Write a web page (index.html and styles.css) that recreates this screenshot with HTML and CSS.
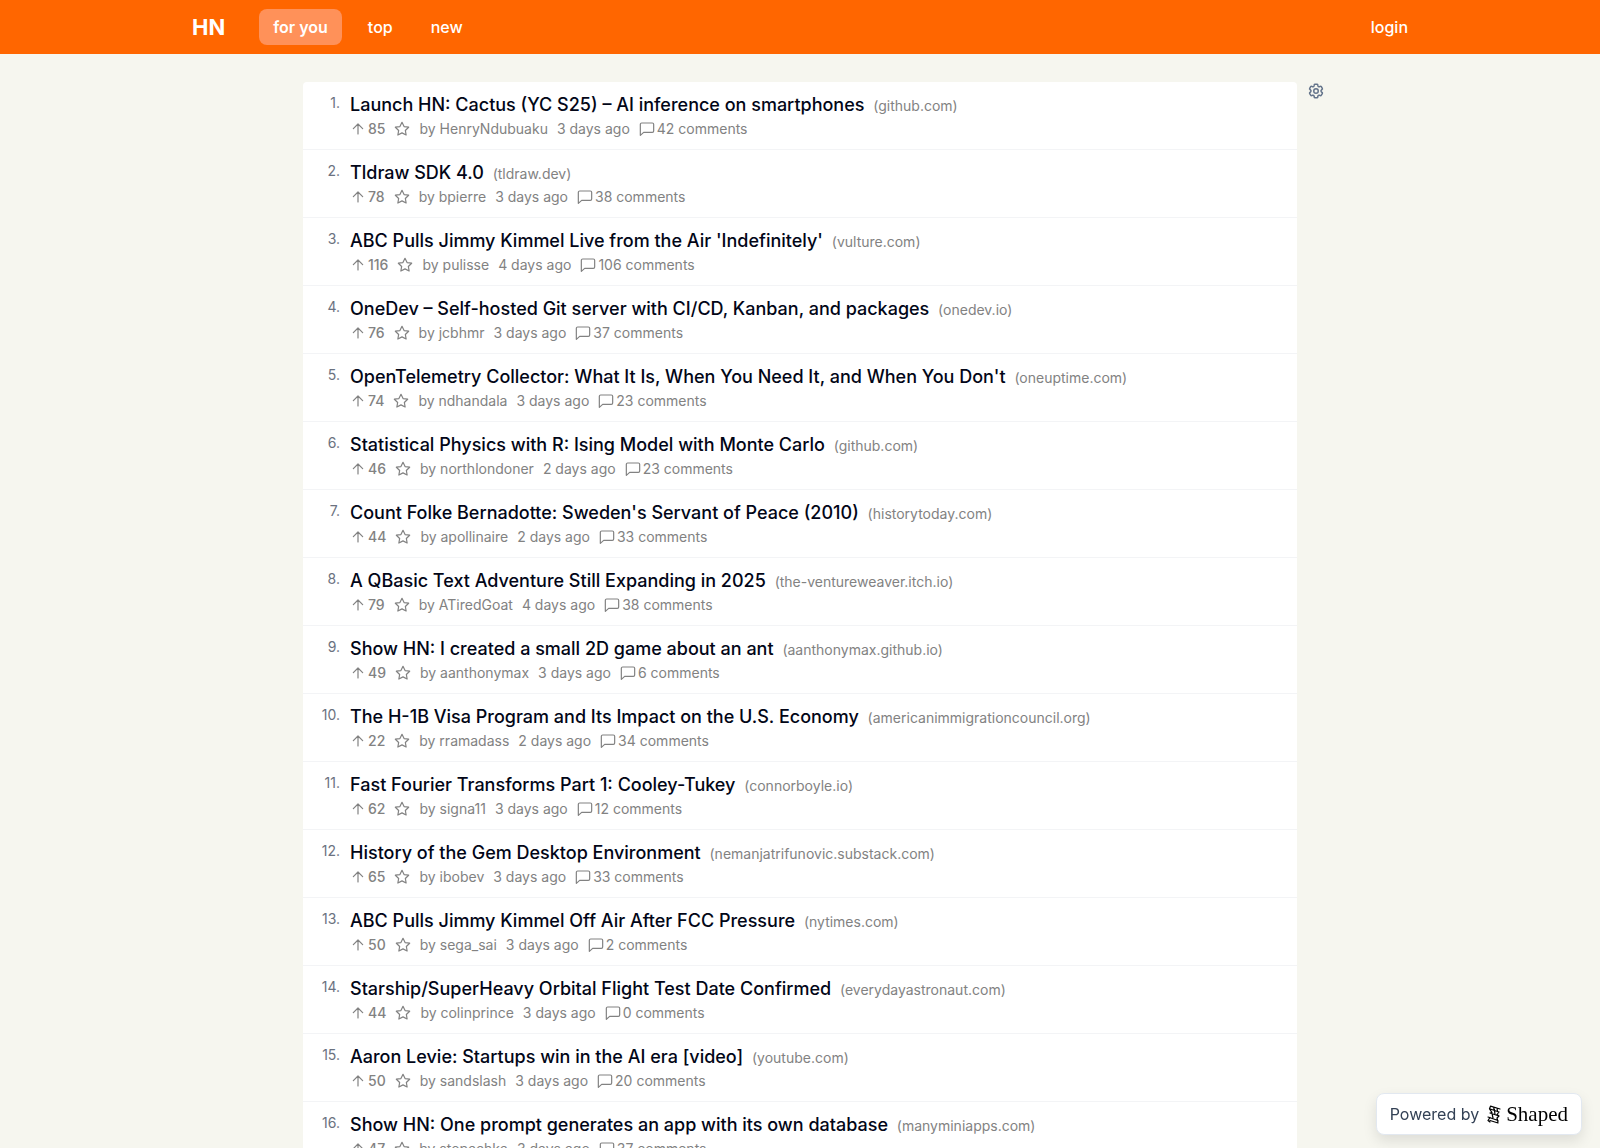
FILE: index.html
```html
<!DOCTYPE html>
<html lang="en">
<head>
    <meta charset="UTF-8">
    <meta name="viewport" content="width=device-width, initial-scale=1">
    <title>HN - for you</title>
    <link rel="stylesheet" href="styles.css">
</head>
<body>
<svg class="sprite" aria-hidden="true">
    <symbol id="arrow" viewBox="0 0 24 24"><path d="M12 19.500V4.500M5 11.500l7-7 7 7"/></symbol>
    <symbol id="star" viewBox="0 0 24 24"><path d="M12 2l3.100 6.300 6.900 1-5 4.900 1.200 6.800-6.200-3.200L5.800 21 7 14.200 2 9.300l6.900-1z"/></symbol>
    <symbol id="comment" viewBox="0 0 24 24"><path d="M22 15a2 2 0 0 1-2 2H7l-5 4.500V5a2 2 0 0 1 2-2h16a2 2 0 0 1 2 2z"/></symbol>
</svg>

<header class="header">
    <div class="header-inner">
        <a class="logo" href="#">HN</a>
        <nav class="nav">
            <a class="nav-link active" href="#">for you</a>
            <a class="nav-link" href="#">top</a>
            <a class="nav-link" href="#">new</a>
        </nav>
        <a class="login" href="#">login</a>
    </div>
</header>

<main class="main">
    <ol class="stories" id="stories"></ol>
    <button class="settings" aria-label="Settings">
        <svg viewBox="0 0 24 24"><path d="M9.600 3.900c.1-.5.500-.9 1.100-.9h2.600c.6 0 1 .4 1.100.9l.2 1.300c.1.400.300.7.600.9l.2.1c.300.2.7.2 1.100.1l1.200-.5c.5-.2 1.100 0 1.400.5l1.300 2.200c.3.500.2 1.100-.3 1.400l-1 .9c-.3.200-.4.600-.4 1v.300c0 .4.100.8.400 1l1 .9c.5.300.6.900.3 1.400l-1.300 2.200c-.3.500-.9.700-1.400.5l-1.200-.5c-.4-.1-.8-.1-1.100.1l-.2.1c-.3.200-.5.500-.6.900l-.2 1.300c-.1.500-.5.900-1.100.9h-2.600c-.6 0-1-.4-1.100-.9l-.2-1.300c-.1-.4-.3-.7-.6-.9l-.2-.1c-.3-.2-.7-.2-1.100-.1l-1.200.5c-.5.200-1.100 0-1.400-.5l-1.300-2.200c-.3-.5-.2-1.100.3-1.400l1-.9c.3-.2.4-.6.400-1v-.3c0-.4-.1-.8-.4-1l-1-.9c-.5-.3-.6-.9-.3-1.400l1.300-2.200c.3-.5.9-.7 1.400-.5l1.200.5c.4.100.8.100 1.100-.1l.2-.1c.3-.2.5-.5.600-.9z"/><circle cx="12" cy="12" r="3"/></svg>
    </button>
</main>

<a class="powered" href="#">
    <span>Powered by</span>
    <span class="shaped">
        <svg viewBox="0 0 14 19"><path d="M3.500 1.200L13 4M2.500 3.800L12 7M3.500 1.200l-1 2.600M6.500 2l1 3.500M10 3l.500 3.500M3 8l9 3M2.500 3.800L5 7.500 3 8M7.500 5.500L8 9.500M12 7l-2 2.500 2 1.500M1 12l10 3.500M3 17l-2-1.500L3 12.500M5 8.500l1 4.500M12 11l-2 2 1 4M3 15.500l8 2.500"/></svg>
        Shaped
    </span>
</a>

<script src="main.js"></script>
</body>
</html>
```
FILE: styles.css
```css
* {
    box-sizing: border-box;
}

body {
    margin: 0;
    background: #f6f6ef;
    color: #020617;
    font-family: Inter, "Liberation Sans", sans-serif;
    font-size: 16px;
    line-height: 24px;
}

a {
    color: inherit;
    text-decoration: none;
}

svg {
    fill: none;
    stroke: currentColor;
    stroke-width: 2;
    stroke-linecap: round;
    stroke-linejoin: round;
}

.sprite {
    display: none;
}

/* header */
.header {
    background: #ff6600;
    color: #fff;
}

.header-inner {
    display: flex;
    align-items: center;
    max-width: 1280px;
    min-height: 54px;
    margin: 0 auto;
    padding: 8px 32px;
}

.logo {
    margin-right: 34px;
    font-size: 22px;
    font-weight: 700;
}

.nav {
    display: flex;
    gap: 14px;
}

.nav-link {
    padding: 6px 12px;
    border-radius: 8px;
    font-weight: 500;
}

.nav-link.active {
    padding: 6px 14px;
    background: #ff9159;
    font-weight: 600;
}

.login {
    margin-left: auto;
    font-weight: 500;
}

/* story list */
.main {
    position: relative;
    max-width: 994px;
    margin: 28px auto 32px;
}

.stories {
    margin: 0;
    padding: 0;
    list-style: none;
    background: #fff;
    border-radius: 4px;
}

.story {
    display: flex;
    gap: 10px;
    padding: 9px 16px 10px 12px;
    border-bottom: 1px solid #f3f4f6;
}

.rank {
    width: 25px;
    color: #6b7280;
    font-size: 14px;
    text-align: right;
}

.title {
    margin: 0;
    font-size: 18px;
    font-weight: 500;
    line-height: 28px;
}

.site {
    margin-left: 4px;
    color: #828282;
    font-size: 14px;
    font-weight: 400;
    line-height: 20px;
}

.meta {
    display: flex;
    align-items: center;
    gap: 9px;
    color: #828282;
    font-size: 14px;
    line-height: 20px;
}

.meta button {
    display: flex;
    align-items: center;
    gap: 2px;
    padding: 0;
    border: 0;
    background: none;
    color: inherit;
    font: inherit;
    cursor: pointer;
}

.meta .vote {
    font-weight: 500;
}

.meta a {
    display: flex;
    align-items: center;
    gap: 2px;
}

.meta svg {
    width: 16px;
    height: 16px;
    stroke-width: 1.8;
}

.settings {
    position: absolute;
    top: 0;
    left: 100%;
    margin-left: 10px;
    padding: 0;
    border: 0;
    background: none;
    color: #64748b;
    line-height: 0;
    cursor: pointer;
}

.settings svg {
    width: 18px;
    height: 18px;
}

/* badge */
.powered {
    position: fixed;
    right: 18px;
    bottom: 13px;
    display: flex;
    align-items: center;
    gap: 8px;
    padding: 8px 13px;
    border: 1px solid #e2e8f0;
    border-radius: 8px;
    background: #fff;
    color: #334155;
    box-shadow: 0 6px 14px rgba(0, 0, 0, 0.1);
}

.shaped {
    display: flex;
    align-items: center;
    gap: 5px;
    color: #000;
    font-family: "Liberation Serif", serif;
    font-size: 21px;
}

.shaped svg {
    width: 14px;
    height: 19px;
    stroke-width: 1.2;
}
```
FILE: main.js
```javascript
// title, site, points, author, age, comments
const stories = [
    ["Launch HN: Cactus (YC S25) – AI inference on smartphones", "github.com", 85, "HenryNdubuaku", "3 days ago", 42],
    ["Tldraw SDK 4.0", "tldraw.dev", 78, "bpierre", "3 days ago", 38],
    ["ABC Pulls Jimmy Kimmel Live from the Air 'Indefinitely'", "vulture.com", 116, "pulisse", "4 days ago", 106],
    ["OneDev – Self-hosted Git server with CI/CD, Kanban, and packages", "onedev.io", 76, "jcbhmr", "3 days ago", 37],
    ["OpenTelemetry Collector: What It Is, When You Need It, and When You Don't", "oneuptime.com", 74, "ndhandala", "3 days ago", 23],
    ["Statistical Physics with R: Ising Model with Monte Carlo", "github.com", 46, "northlondoner", "2 days ago", 23],
    ["Count Folke Bernadotte: Sweden's Servant of Peace (2010)", "historytoday.com", 44, "apollinaire", "2 days ago", 33],
    ["A QBasic Text Adventure Still Expanding in 2025", "the-ventureweaver.itch.io", 79, "ATiredGoat", "4 days ago", 38],
    ["Show HN: I created a small 2D game about an ant", "aanthonymax.github.io", 49, "aanthonymax", "3 days ago", 6],
    ["The H-1B Visa Program and Its Impact on the U.S. Economy", "americanimmigrationcouncil.org", 22, "rramadass", "2 days ago", 34],
    ["Fast Fourier Transforms Part 1: Cooley-Tukey", "connorboyle.io", 62, "signa11", "3 days ago", 12],
    ["History of the Gem Desktop Environment", "nemanjatrifunovic.substack.com", 65, "ibobev", "3 days ago", 33],
    ["ABC Pulls Jimmy Kimmel Off Air After FCC Pressure", "nytimes.com", 50, "sega_sai", "3 days ago", 2],
    ["Starship/SuperHeavy Orbital Flight Test Date Confirmed", "everydayastronaut.com", 44, "colinprince", "3 days ago", 0],
    ["Aaron Levie: Startups win in the AI era [video]", "youtube.com", 50, "sandslash", "3 days ago", 20],
    ["Show HN: One prompt generates an app with its own database", "manyminiapps.com", 47, "stopachka", "3 days ago", 37]
];

function icon(name) {
    return `<svg aria-hidden="true"><use href="#${name}"/></svg>`;
}

document.getElementById("stories").innerHTML = stories.map(([title, site, points, author, age, comments], i) => `
    <li class="story">
        <span class="rank">${i + 1}.</span>
        <div>
            <h2 class="title"><a href="#">${title}</a> <span class="site">(${site})</span></h2>
            <div class="meta">
                <button class="vote">${icon("arrow")}${points}</button>
                <button aria-label="Save">${icon("star")}</button>
                <span>by ${author}</span>
                <span>${age}</span>
                <a href="#">${icon("comment")}${comments} comments</a>
            </div>
        </div>
    </li>`).join("");
```
